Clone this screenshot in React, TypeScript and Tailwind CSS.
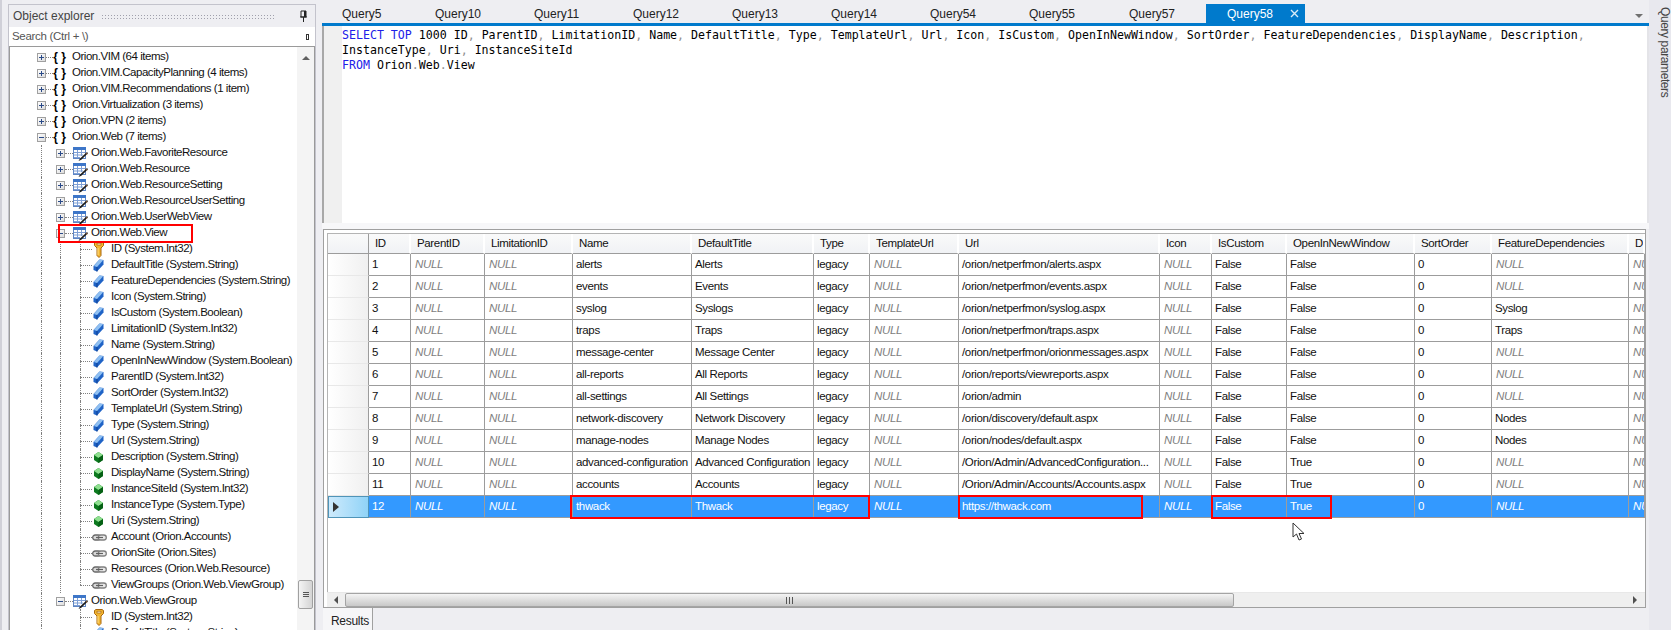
import React from 'react'

const SANS = 'font-["Liberation_Sans",Arial,sans-serif]'

type Kind = 'ns' | 'table' | 'key' | 'prop' | 'gem' | 'link'
type TreeItem = { label: string; level: 0 | 1 | 2; kind: Kind; open?: boolean; last?: boolean; noMid?: boolean }

const ns = (label: string, open = false): TreeItem => ({ label, level: 0, kind: 'ns', open })
const tbl = (label: string, open = false, noMid = false): TreeItem => ({ label, level: 1, kind: 'table', open, noMid })
const leaf = (label: string, kind: Kind, last = false, noMid = false): TreeItem => ({ label, level: 2, kind, last, noMid })

const treeItems: TreeItem[] = [
  ns('Orion.VIM (64 items)'),
  ns('Orion.VIM.CapacityPlanning (4 items)'),
  ns('Orion.VIM.Recommendations (1 item)'),
  ns('Orion.Virtualization (3 items)'),
  ns('Orion.VPN (2 items)'),
  ns('Orion.Web (7 items)', true),
  tbl('Orion.Web.FavoriteResource'),
  tbl('Orion.Web.Resource'),
  tbl('Orion.Web.ResourceSetting'),
  tbl('Orion.Web.ResourceUserSetting'),
  tbl('Orion.Web.UserWebView'),
  tbl('Orion.Web.View', true),
  leaf('ID (System.Int32)', 'key'),
  leaf('DefaultTitle (System.String)', 'prop'),
  leaf('FeatureDependencies (System.String)', 'prop'),
  leaf('Icon (System.String)', 'prop'),
  leaf('IsCustom (System.Boolean)', 'prop'),
  leaf('LimitationID (System.Int32)', 'prop'),
  leaf('Name (System.String)', 'prop'),
  leaf('OpenInNewWindow (System.Boolean)', 'prop'),
  leaf('ParentID (System.Int32)', 'prop'),
  leaf('SortOrder (System.Int32)', 'prop'),
  leaf('TemplateUrl (System.String)', 'prop'),
  leaf('Type (System.String)', 'prop'),
  leaf('Url (System.String)', 'prop'),
  leaf('Description (System.String)', 'gem'),
  leaf('DisplayName (System.String)', 'gem'),
  leaf('InstanceSiteId (System.Int32)', 'gem'),
  leaf('InstanceType (System.Type)', 'gem'),
  leaf('Uri (System.String)', 'gem'),
  leaf('Account (Orion.Accounts)', 'link'),
  leaf('OrionSite (Orion.Sites)', 'link'),
  leaf('Resources (Orion.Web.Resource)', 'link'),
  leaf('ViewGroups (Orion.Web.ViewGroup)', 'link', true),
  tbl('Orion.Web.ViewGroup', true),
  leaf('ID (System.Int32)', 'key', false, true),
  leaf('DefaultTitle (System.String)', 'prop', false, true),
]

const columns = ['ID', 'ParentID', 'LimitationID', 'Name', 'DefaultTitle', 'Type', 'TemplateUrl', 'Url', 'Icon', 'IsCustom', 'OpenInNewWindow', 'SortOrder', 'FeatureDependencies', 'Di']

const N = null
const rows: (string | null)[][] = [
  ['1', N, N, 'alerts', 'Alerts', 'legacy', N, '/orion/netperfmon/alerts.aspx', N, 'False', 'False', '0', N, N],
  ['2', N, N, 'events', 'Events', 'legacy', N, '/orion/netperfmon/events.aspx', N, 'False', 'False', '0', N, N],
  ['3', N, N, 'syslog', 'Syslogs', 'legacy', N, '/orion/netperfmon/syslog.aspx', N, 'False', 'False', '0', 'Syslog', N],
  ['4', N, N, 'traps', 'Traps', 'legacy', N, '/orion/netperfmon/traps.aspx', N, 'False', 'False', '0', 'Traps', N],
  ['5', N, N, 'message-center', 'Message Center', 'legacy', N, '/orion/netperfmon/orionmessages.aspx', N, 'False', 'False', '0', N, N],
  ['6', N, N, 'all-reports', 'All Reports', 'legacy', N, '/orion/reports/viewreports.aspx', N, 'False', 'False', '0', N, N],
  ['7', N, N, 'all-settings', 'All Settings', 'legacy', N, '/orion/admin', N, 'False', 'False', '0', N, N],
  ['8', N, N, 'network-discovery', 'Network Discovery', 'legacy', N, '/orion/discovery/default.aspx', N, 'False', 'False', '0', 'Nodes', N],
  ['9', N, N, 'manage-nodes', 'Manage Nodes', 'legacy', N, '/orion/nodes/default.aspx', N, 'False', 'False', '0', 'Nodes', N],
  ['10', N, N, 'advanced-configuration', 'Advanced Configuration', 'legacy', N, '/Orion/Admin/AdvancedConfiguration...', N, 'False', 'True', '0', N, N],
  ['11', N, N, 'accounts', 'Accounts', 'legacy', N, '/Orion/Admin/Accounts/Accounts.aspx', N, 'False', 'True', '0', N, N],
  ['12', N, N, 'thwack', 'Thwack', 'legacy', N, 'https://thwack.com', N, 'False', 'True', '0', N, N],
]

const tabs = [
  { name: 'Query5', w: 'w-[93px]' },
  { name: 'Query10', w: 'w-[99px]' },
  { name: 'Query11', w: 'w-[99px]' },
  { name: 'Query12', w: 'w-[99px]' },
  { name: 'Query13', w: 'w-[99px]' },
  { name: 'Query14', w: 'w-[99px]' },
  { name: 'Query54', w: 'w-[99px]' },
  { name: 'Query55', w: 'w-[100px]' },
  { name: 'Query57', w: 'w-[77px]' },
]

function NodeIcon({ kind }: { kind: Kind }) {
  if (kind === 'ns') {
    return <span className="w-[13px] text-center text-[12px] font-bold leading-none tracking-normal text-black whitespace-pre">{'{ }'}</span>
  }
  if (kind === 'table') {
    return (
      <svg width="15" height="15" viewBox="0 0 15 15" className="shrink-0">
        <rect x="0.5" y="1.5" width="12" height="11" fill="#fff" stroke="#5f86c4" />
        <rect x="0" y="1" width="13" height="3" fill="#3d76c8" />
        <path d="M1 6.5h11M1 9h9M1 11.5h6M4.5 4v8M8.5 4v6" stroke="#7fa0d6" strokeWidth="1" />
        <path d="M14 6 7 12.5 5.5 15l2.8-1.2L15 7.2z" fill="#1c1c1c" />
        <path d="M12.8 7.2l1.4 1.2" stroke="#b06a30" />
      </svg>
    )
  }
  if (kind === 'key') {
    return (
      <svg width="10" height="17" viewBox="0 0 10 17" className="shrink-0">
        <path d="M0.5 1.5 2 0.5h6l1.5 1v3L7 7v7.5L5 16.5l-2-2V7L0.5 4.5z" fill="#f2b632" stroke="#a8660c" strokeWidth="1" />
        <rect x="3" y="2.2" width="4" height="1.8" fill="#fff6d0" stroke="#a8660c" strokeWidth="0.7" />
        <path d="M4 7v7" stroke="#ffe08a" />
      </svg>
    )
  }
  if (kind === 'prop') {
    return (
      <svg width="11" height="13" viewBox="0 0 11 13" className="shrink-0">
        <path d="M6.5 0.5 10.5 1v4.5L4 12.5 0.5 11V7z" fill="#1f63c6" />
        <path d="M6.5 0.5 10.2 1.2 4 8 0.8 7z" fill="#8fc0f2" />
        <path d="M4 8v4.5" stroke="#0e3f8f" />
      </svg>
    )
  }
  if (kind === 'gem') {
    return (
      <svg width="9" height="11" viewBox="0 0 9 11" className="shrink-0">
        <path d="M4.5 0 9 3v5l-4.5 3L0 8V3z" fill="#0d7a1f" />
        <path d="M4.5 0 9 3 4.5 6 0 3z" fill="#8fe08f" />
        <path d="M4.5 6v5L9 8V3z" fill="#056014" />
      </svg>
    )
  }
  return (
    <svg width="15" height="7" viewBox="0 0 15 7" className="shrink-0">
      <rect x="0.7" y="1" width="8" height="5" rx="2.5" fill="#d8d8d8" stroke="#686868" strokeWidth="1.3" />
      <rect x="6.3" y="1" width="8" height="5" rx="2.5" fill="#e8e8e8" stroke="#808080" strokeWidth="1.3" />
      <path d="M4 3.5h7" stroke="#606060" strokeWidth="1.2" />
    </svg>
  )
}

function Expander({ open }: { open: boolean }) {
  return (
    <span className="relative flex h-[9px] w-[9px] shrink-0 items-center justify-center border border-[#a0a0a0] bg-gradient-to-br from-white to-[#dcdcdc]">
      <span className="h-px w-[5px] bg-[#2a4a88]" />
      {!open && <span className="absolute h-[5px] w-px bg-[#2a4a88]" />}
    </span>
  )
}

function Guide({ w }: { w: string }) {
  return <span className={`h-full shrink-0 border-l border-dotted border-[#808080] ${w}`} />
}

function TreeRow({ item }: { item: TreeItem }) {
  return (
    <div className="flex h-4 shrink-0 items-center whitespace-nowrap text-[11.5px] tracking-[-0.47px] text-[#111]">
      {item.level === 0 && (
        <>
          <span className="w-[27px] shrink-0" />
          <Expander open={!!item.open} />
          <span className="w-[7px] shrink-0 border-t border-dotted border-[#808080]" />
          <NodeIcon kind="ns" />
          <span className="ml-[6px]">{item.label}</span>
        </>
      )}
      {item.level === 1 && (
        <>
          <span className="w-[31px] shrink-0" />
          <Guide w="w-[15px]" />
          <Expander open={!!item.open} />
          <span className="w-[8px] shrink-0 border-t border-dotted border-[#808080]" />
          <NodeIcon kind="table" />
          <span className="ml-[3px]">{item.label}</span>
        </>
      )}
      {item.level === 2 && (
        <>
          <span className="w-[31px] shrink-0" />
          <Guide w="w-[19px]" />
          {item.noMid ? <span className="h-full w-5 shrink-0" /> : <Guide w="w-5" />}
          <span className="flex h-full w-[12px] shrink-0 flex-col">
            <span className="h-1/2 border-l border-dotted border-[#808080]" />
            <span className={`h-1/2 border-t border-dotted border-[#808080] ${item.last ? '' : 'border-l'}`} />
          </span>
          <span className={`flex shrink-0 items-center justify-center ${item.kind === 'link' ? 'w-[15px]' : 'w-[13px]'}`}>
            <NodeIcon kind={item.kind} />
          </span>
          <span className={item.kind === 'link' ? 'ml-[4px]' : 'ml-[6px]'}>{item.label}</span>
        </>
      )}
    </div>
  )
}

function ObjectExplorer() {
  return (
    <aside className="flex h-full w-[308px] shrink-0 flex-col border-x border-t border-[#c3c3cc] bg-[#eeeef2]">
      <div className="flex h-[22px] shrink-0 items-center pl-[4px] pr-[7px] text-[12px] text-[#444]">
        <span>Object explorer</span>
        <span className="mx-[7px] h-[5px] w-[174px] bg-[radial-gradient(#a0a0ac_0.8px,transparent_0.9px)] bg-[length:3px_3px]" />
        <svg width="9" height="12" viewBox="0 0 9 12" className="ml-auto">
          <path d="M2 1h5v6H2zM1 7h7M4.5 7v5" fill="none" stroke="#222" />
          <path d="M5 1h2v6H5z" fill="#222" />
        </svg>
      </div>
      <div className="flex h-[19px] shrink-0 items-center justify-between bg-white pl-[3px] pr-[6px] text-[11.5px] tracking-[-0.3px] text-[#555]">
        <span>Search (Ctrl + \)</span>
        <span className="h-[6px] w-[3px] border border-[#333]" />
      </div>
      <div className="flex min-h-0 flex-1 overflow-hidden border-x border-t border-[#9a9a9a] bg-white">
        <div className="flex min-w-0 flex-1 flex-col overflow-hidden">
          <div className="h-[2px] shrink-0" />
          {treeItems.map((item, i) => (
            <TreeRow key={i} item={item} />
          ))}
        </div>
        <div className="flex w-[17px] shrink-0 flex-col items-center bg-[#f4f4f4] pt-[9px]">
          <span className="h-0 w-0 border-x-[4px] border-b-[4px] border-x-transparent border-b-[#606060]" />
          <span className="mt-[520px] flex h-[29px] w-[15px] flex-col items-center justify-center gap-px rounded-[2px] border border-[#a0a0a0] bg-gradient-to-r from-[#f4f4f4] to-[#d4d4d4]">
            <span className="h-px w-[6px] bg-[#555]" />
            <span className="h-px w-[6px] bg-[#555]" />
            <span className="h-px w-[6px] bg-[#555]" />
          </span>
        </div>
      </div>
    </aside>
  )
}

function TabStrip() {
  return (
    <div className="flex h-[23px] shrink-0 items-end pl-[20px] pr-[6px] text-[12px] text-[#222]">
      {tabs.map((t) => (
        <div key={t.name} className={`flex h-[19px] shrink-0 items-center ${t.w}`}>
          {t.name}
        </div>
      ))}
      <div className="flex h-[19px] w-[99px] shrink-0 items-center justify-between bg-[#007acc] pl-[21px] pr-[6px] text-white">
        <span>Query58</span>
        <svg width="9" height="9" viewBox="0 0 9 9">
          <path d="M1 1l7 7M8 1 1 8" stroke="#d8ecf8" strokeWidth="1.4" />
        </svg>
      </div>
      <span className="ml-auto mb-[5px] h-0 w-0 border-x-[4px] border-t-[4px] border-x-transparent border-t-[#707070]" />
    </div>
  )
}

function Comma() {
  return <span className="text-[#909090]">,</span>
}

function QueryEditor() {
  const first = ['ParentID', 'LimitationID', 'Name', 'DefaultTitle', 'Type', 'TemplateUrl', 'Url', 'Icon', 'IsCustom', 'OpenInNewWindow', 'SortOrder', 'FeatureDependencies', 'DisplayName', 'Description']
  return (
    <div className="flex h-[200px] shrink-0 border-t-[3px] border-[#007acc] bg-white">
      <div className="w-[20px] shrink-0 border-l-2 border-[#a8a8a8] bg-[#f0f0f0]" />
      <div className='flex-1 whitespace-pre border-r-2 border-[#e4e4e8] pt-[2px] font-["DejaVu_Sans_Mono",monospace] text-[11.6px] leading-[15px] text-black'>
        <div>
          <span className="text-[#2020e8]">SELECT TOP</span> 1000 ID<Comma />
          {first.map((c) => (
            <span key={c}> {c}<Comma /></span>
          ))}
        </div>
        <div>
          InstanceType<Comma /> Uri<Comma /> InstanceSiteId
        </div>
        <div>
          <span className="text-[#2020e8]">FROM</span> Orion<span className="text-[#909090]">.</span>Web<span className="text-[#909090]">.</span>View
        </div>
      </div>
    </div>
  )
}

function RowHeader({ selected }: { selected: boolean }) {
  if (selected) {
    return (
      <div className="flex h-[22px] items-center border border-[#4f94b8] bg-gradient-to-r from-[#cdeafc] to-[#8fd3f7] pl-[4px]">
        <span className="h-0 w-0 border-y-[5px] border-l-[6px] border-y-transparent border-l-[#333]" />
      </div>
    )
  }
  return <div className="h-[22px] border-b border-[#e8e8e8] border-r border-r-[#9c9c9c] bg-gradient-to-r from-white to-[#f0f0f0]" />
}

function ResultsGrid() {
  return (
    <div className="flex min-h-0 flex-1 flex-col border border-[#a0a0a0] bg-white pl-[3px] pt-[3px]">
      <div className="min-h-0 flex-1 overflow-hidden border-l border-t border-[#b4b4b4]">
        <div className="grid grid-cols-[41px_42px_74px_88px_119px_122px_56px_89px_201px_52px_75px_128px_77px_137px_16px] text-[11.5px] tracking-[-0.35px]">
          <div className="h-[20px] border-b border-r border-[#9c9c9c] bg-gradient-to-b from-[#fafafa] to-[#f0f2f5]" />
          {columns.map((c) => (
            <div key={c} className="flex h-[20px] items-center overflow-hidden whitespace-nowrap border-b border-b-[#9c9c9c] border-r-2 border-r-white bg-gradient-to-b from-[#fafafa] to-[#f0f2f5] pl-[6px] text-[#111]">
              {c}
            </div>
          ))}
          {rows.map((row, r) => {
            const selected = r === rows.length - 1
            return (
              <React.Fragment key={r}>
                <RowHeader selected={selected} />
                {row.map((v, c) => (
                  <div
                    key={c}
                    className={`flex h-[22px] items-center overflow-hidden whitespace-nowrap border-b border-r border-[#9c9c9c] pl-[3px] ${selected ? 'bg-[#3399ff] text-white' : 'bg-white text-[#111]'} ${v === null ? (selected ? 'italic text-[#e4f0ff]' : 'italic text-[#808080]') : ''}`}
                  >
                    {v === null ? <span className="pl-[1px]">NULL</span> : v}
                  </div>
                ))}
              </React.Fragment>
            )
          })}
        </div>
      </div>
      <div className="flex h-[15px] shrink-0 items-stretch border-t border-[#e8e8e8] bg-[#efefef] pr-[1px]">
        <div className="flex w-[18px] items-center justify-center">
          <span className="h-0 w-0 border-y-[4px] border-r-[4px] border-y-transparent border-r-[#505050]" />
        </div>
        <div className="flex w-[889px] items-center justify-center rounded-[2px] border border-[#a4a4a4] bg-gradient-to-b from-[#f4f4f4] to-[#c8c8c8]">
          <span className="h-[7px] w-[7px] border-x border-[#555] bg-[linear-gradient(90deg,transparent_40%,#555_40%,#555_60%,transparent_60%)]" />
        </div>
        <div className="flex-1" />
        <div className="flex w-[18px] items-center justify-center">
          <span className="h-0 w-0 border-y-[4px] border-l-[4px] border-y-transparent border-l-[#505050]" />
        </div>
      </div>
    </div>
  )
}

function RedBox({ className }: { className: string }) {
  return <div className={`pointer-events-none absolute border-2 border-[#ff0000] ${className}`} />
}

export default function App() {
  return (
    <div className={`relative flex h-[630px] w-[1671px] overflow-hidden border-l-2 border-[#d0d0d8] bg-[#eeeef2] pl-[6px] pt-[4px] ${SANS}`}>
      <ObjectExplorer />
      <main className="-mt-[4px] flex h-[630px] min-w-0 flex-1 flex-col pl-[6px]">
        <TabStrip />
        <QueryEditor />
        <div className="h-[6px] shrink-0 bg-[#f7f7f9]" />
        <div className="flex min-h-0 flex-1 flex-col pl-px pr-[3px]">
          <ResultsGrid />
          <div className="flex h-[22px] shrink-0">
            <div className="flex w-[50px] items-center border-r border-[#a0a0a0] bg-[#f6f6f8] pl-[8px] pt-[3px] text-[12px] tracking-[-0.3px] text-[#222]">Results</div>
          </div>
        </div>
      </main>
      <div className="-mt-[4px] flex w-[22px] shrink-0 justify-end bg-[#e8e8ee] pt-[7px]">
        <span className="text-[12px] leading-[13px] tracking-[-0.4px] text-[#444] [writing-mode:vertical-rl]">Query parameters</span>
      </div>

      <RedBox className="left-[56px] top-[224px] h-[19px] w-[135px]" />
      <RedBox className="left-[568px] top-[495px] h-[24px] w-[300px]" />
      <RedBox className="left-[956px] top-[495px] h-[24px] w-[185px]" />
      <RedBox className="left-[1209px] top-[495px] h-[24px] w-[121px]" />

      <svg width="14" height="20" viewBox="0 0 14 20" className="absolute left-[1290px] top-[522px]">
        <path d="M1 1v14l3.5-3 2.5 6 2.5-1-2.5-5.5H12z" fill="#fff" stroke="#333" strokeWidth="1" />
      </svg>
    </div>
  )
}
